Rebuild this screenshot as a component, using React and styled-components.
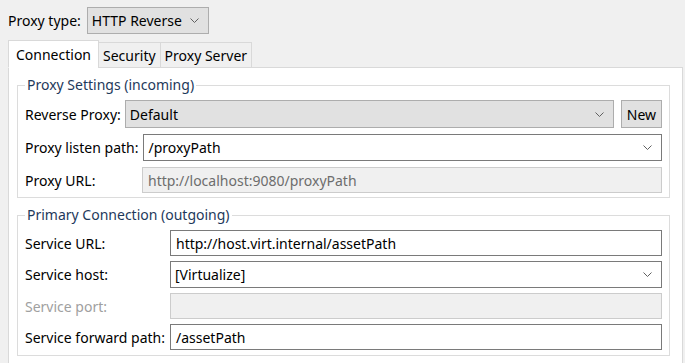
import React from 'react';
import styled, { createGlobalStyle } from 'styled-components';

const GlobalStyle = createGlobalStyle`
  html, body {
    margin: 0;
    padding: 0;
    background: #f0f0f0;
    overflow: hidden;
  }
  body {
    font-family: 'Noto Sans', 'Open Sans', sans-serif;
    font-size: 14px;
    color: #000;
  }
`;

const Page = styled.div`
  display: flex;
  flex-direction: column;
  padding: 7px 2px 0 8px;
`;

const TopRow = styled.div`
  display: flex;
  align-items: center;
  gap: 6px;
  height: 27px;
`;

const Label = styled.span`
  flex: 0 0 ${p => (p.$width ? `${p.$width}px` : 'auto')};
  white-space: nowrap;
  color: ${p => (p.$disabled ? '#a0a0a0' : '#000')};
`;

const Combo = styled.div`
  display: flex;
  align-items: center;
  box-sizing: border-box;
  height: ${p => p.$h || 27}px;
  width: ${p => (p.$w ? `${p.$w}px` : 'auto')};
  flex: ${p => (p.$w ? '0 0 auto' : '1 1 0')};
  padding: 0 9px 0 4px;
  background: ${p => (p.$flat ? '#ffffff' : '#e1e1e1')};
  border: 1px solid ${p => (p.$flat ? '#7a7a7a' : '#adadad')};
  white-space: nowrap;

  span {
    flex: 1;
  }
`;

const Field = styled.div`
  flex: 1 1 0;
  display: flex;
  align-items: center;
  box-sizing: border-box;
  height: ${p => p.$h || 26}px;
  padding: 0 5px;
  white-space: nowrap;
  background: ${p => (p.$disabled ? '#f0f0f0' : '#ffffff')};
  border: 1px solid ${p => (p.$disabled ? '#cccccc' : '#7a7a7a')};
  color: ${p => (p.$disabled ? '#6d6d6d' : '#000')};
`;

const Button = styled.button`
  box-sizing: border-box;
  height: 28px;
  width: 41px;
  padding: 0;
  font: inherit;
  color: #000;
  background: #e1e1e1;
  border: 1px solid #adadad;
`;

const TabBar = styled.div`
  display: flex;
  align-items: flex-end;
  margin-top: 6px;
  margin-bottom: -1px;
  position: relative;
  z-index: 1;
`;

const Tab = styled.div`
  box-sizing: border-box;
  height: ${p => (p.$active ? 28 : 26)}px;
  padding: 0 ${p => (p.$active ? 7 : 4)}px;
  display: flex;
  align-items: center;
  background: ${p => (p.$active ? '#ffffff' : '#f0f0f0')};
  border: 1px solid #d9d9d9;
  border-bottom-color: ${p => (p.$active ? '#ffffff' : '#d9d9d9')};
  margin-left: ${p => (p.$first ? 0 : -1)}px;
  white-space: nowrap;
`;

const Panel = styled.div`
  background: #ffffff;
  border: 1px solid #d9d9d9;
  padding: 7px 12px 7px 8px;
  display: flex;
  flex-direction: column;
  gap: 7px;
`;

const Group = styled.fieldset`
  margin: 0;
  padding: 5px 7px ${p => p.$pb || 4}px 7px;
  border: 1px solid #dcdcdc;
  min-inline-size: 0;
  display: flex;
  flex-direction: column;
  gap: ${p => p.$gap || 6}px;
`;

const Legend = styled.legend`
  padding: 0 2px;
  margin-left: 0;
  color: #1e395b;
  line-height: 20px;
`;

const Row = styled.div`
  display: flex;
  align-items: center;
  flex: ${p => (p.$grow ? '1 1 0' : '0 0 auto')};
  gap: ${p => p.$gap || 5}px;
`;

const Chevron = () => (
  <svg width="9" height="5" viewBox="0 0 9 5" fill="none">
    <path d="M0.5 0.5 L4.5 4.5 L8.5 0.5" stroke="#606060" strokeWidth="1" />
  </svg>
);

const Dropdown = ({ children, ...rest }) => (
  <Combo {...rest}>
    <span>{children}</span>
    <Chevron />
  </Combo>
);

export default function App() {
  return (
    <>
      <GlobalStyle />
      <Page>
        <TopRow>
          <Label>Proxy type:</Label>
          <Dropdown $w={122} $h={27}>HTTP Reverse</Dropdown>
        </TopRow>
        <TabBar>
          <Tab $active $first>Connection</Tab>
          <Tab>Security</Tab>
          <Tab>Proxy Server</Tab>
        </TabBar>
        <Panel>
          <Group>
            <Legend>Proxy Settings (incoming)</Legend>
            <Row $gap={4}>
              <Label>Reverse Proxy:</Label>
              <Row $gap={7} $grow>
                <Dropdown $h={28}>Default</Dropdown>
                <Button>New</Button>
              </Row>
            </Row>
            <Row>
              <Label $width={112}>Proxy listen path:</Label>
              <Dropdown $flat $h={27}>/proxyPath</Dropdown>
            </Row>
            <Row>
              <Label $width={112}>Proxy URL:</Label>
              <Field $disabled>http://localhost:9080/proxyPath</Field>
            </Row>
          </Group>
          <Group $gap={5} $pb={5}>
            <Legend>Primary Connection (outgoing)</Legend>
            <Row>
              <Label $width={140}>Service URL:</Label>
              <Field>http://host.virt.internal/assetPath</Field>
            </Row>
            <Row>
              <Label $width={140}>Service host:</Label>
              <Dropdown $flat $h={27}>[Virtualize]</Dropdown>
            </Row>
            <Row>
              <Label $width={140} $disabled>Service port:</Label>
              <Field $disabled />
            </Row>
            <Row>
              <Label $width={140}>Service forward path:</Label>
              <Field>/assetPath</Field>
            </Row>
          </Group>
        </Panel>
      </Page>
    </>
  );
}
